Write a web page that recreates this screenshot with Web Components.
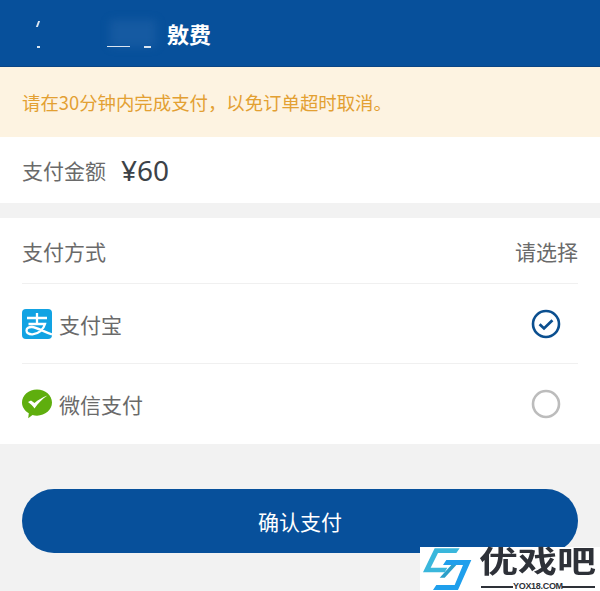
<!DOCTYPE html>
<html lang="zh">
<head>
<meta charset="utf-8">
<title>缴费</title>
<style>
    html, body { margin: 0; padding: 0; }
    body {
        width: 600px;
        height: 591px;
        overflow: hidden;
        position: relative;
        background: #f2f2f2;
        font-family: "Noto Sans CJK SC", "Noto Sans", sans-serif;
    }
</style>
</head>
<body>
<pay-header>敫费</pay-header>
<pay-notice>请在30分钟内完成支付，以免订单超时取消。</pay-notice>
<pay-amount label="支付金额" value="¥60"></pay-amount>
<pay-methods>
    <pay-method label="支付宝" checked>
        <svg slot="icon" width="30" height="30" viewBox="0 0 30 30">
            <rect width="30" height="30" rx="4" fill="#12a3e3"/>
            <path d="M5 9H25M15 4V15M6.5 15H23C21.5 20.5 16.5 25 10.5 25.3C6.5 25.5 4.5 23.7 4.5 21.6C4.5 19.2 7 17.8 10 18C15 18.4 21 22.5 30 25.5" fill="none" stroke="#fff" stroke-width="2.3"/>
        </svg>
    </pay-method>
    <pay-method label="微信支付">
        <svg slot="icon" width="30" height="30" viewBox="0 0 30 30">
            <path d="M15 0.5C23.3 0.5 30 6.4 30 13.6C30 20.8 23.3 26.7 15 26.7C13.4 26.7 11.9 26.5 10.5 26.1L6.2 29.2L6.8 24.3C2.7 21.9 0 18 0 13.6C0 6.4 6.7 0.5 15 0.5Z" fill="#5fae0e"/>
            <path d="M6 13L9 11.5L12.5 14C16 11 20 8.5 25.5 6.5C20 10 16 14.5 12.5 19.5C11 17 8.5 15 6 13Z" fill="#fff"/>
        </svg>
    </pay-method>
</pay-methods>
<pay-button>确认支付</pay-button>
<site-badge></site-badge>

<script>
class PayHeader extends HTMLElement {
    constructor() {
        super();
        this.attachShadow({ mode: 'open' });
        this.shadowRoot.innerHTML = `
            <style>
                :host {
                    display: flex;
                    align-items: center;
                    box-sizing: border-box;
                    height: 67px;
                    padding-left: 167px;
                    background: #07509b;
                    border-bottom: 1px solid #0a4585;
                    position: relative;
                }
                .title {
                    color: #fff;
                    font-size: 22px;
                    font-weight: 700;
                    line-height: 1;
                }
                /* leftovers of the blurred-out part of the title */
                .smudge { position: absolute; background: rgba(255,255,255,.85); }
                .blur { position: absolute; left: 110px; top: 20px; width: 46px; height: 27px; background: rgba(50,110,175,.35); filter: blur(4px); }
            </style>
            <div class="blur"></div>
            <i class="smudge" style="left:37px;top:21px;width:2px;height:6px;transform:skewX(-20deg)"></i>
            <i class="smudge" style="left:37px;top:46px;width:3px;height:2px"></i>
            <i class="smudge" style="left:107px;top:46px;width:23px;height:1px"></i>
            <i class="smudge" style="left:144px;top:46px;width:7px;height:2px"></i>
            <span class="title"><slot></slot></span>
        `;
    }
}

class PayNotice extends HTMLElement {
    constructor() {
        super();
        this.attachShadow({ mode: 'open' });
        this.shadowRoot.innerHTML = `
            <style>
                :host {
                    display: flex;
                    align-items: center;
                    box-sizing: border-box;
                    height: 70px;
                    padding-left: 22px;
                    background: #fdf3e1;
                    color: #e3a032;
                    font-size: 18.4px;
                }
            </style>
            <slot></slot>
        `;
    }
}

class PayAmount extends HTMLElement {
    constructor() {
        super();
        this.attachShadow({ mode: 'open' });
        this.shadowRoot.innerHTML = `
            <style>
                :host {
                    display: flex;
                    align-items: center;
                    gap: 15px;
                    box-sizing: border-box;
                    height: 66px;
                    padding-left: 22px;
                    margin-bottom: 15px;
                    background: #fff;
                }
                .label { color: #6a6a6a; font-size: 21px; }
                .value { color: #3c4248; font-size: 28px; font-family: "Noto Sans", "Noto Sans CJK SC", sans-serif; }
            </style>
            <span class="label">${this.getAttribute('label')}</span>
            <span class="value">${this.getAttribute('value')}</span>
        `;
    }
}

class PayMethods extends HTMLElement {
    constructor() {
        super();
        this.attachShadow({ mode: 'open' });
        this.shadowRoot.innerHTML = `
            <style>
                :host {
                    display: block;
                    height: 226px;
                    padding: 0 22px;
                    background: #fff;
                }
                .head {
                    display: flex;
                    align-items: center;
                    justify-content: space-between;
                    height: 65px;
                    color: #6a6a6a;
                    font-size: 21px;
                }
            </style>
            <div class="head"><span>支付方式</span><span>请选择</span></div>
            <slot></slot>
        `;
    }
}

class PayMethod extends HTMLElement {
    constructor() {
        super();
        this.attachShadow({ mode: 'open' });
        const mark = this.hasAttribute('checked')
            ? `<svg width="30" height="30" viewBox="0 0 30 30">
                   <circle cx="15" cy="15" r="13" fill="none" stroke="#0b4f8f" stroke-width="2.6"/>
                   <path d="M8.6 15.2L13 19.4L21.4 11.2" fill="none" stroke="#0b4f8f" stroke-width="2.8"/>
               </svg>`
            : `<svg width="30" height="30" viewBox="0 0 30 30">
                   <circle cx="15" cy="15" r="13" fill="none" stroke="#bcbcbc" stroke-width="2.6"/>
               </svg>`;
        this.shadowRoot.innerHTML = `
            <style>
                :host {
                    display: flex;
                    align-items: center;
                    gap: 7px;
                    box-sizing: border-box;
                    height: 80px;
                    border-top: 1px solid #f0f0f0;
                    color: #6a6a6a;
                    font-size: 21px;
                }
                :host(:last-child) { height: 81px; }
                .icon { display: flex; }
                .label { flex: 1; }
                .mark { display: flex; margin-right: 17px; }
            </style>
            <span class="icon"><slot name="icon"></slot></span>
            <span class="label">${this.getAttribute('label')}</span>
            <span class="mark">${mark}</span>
        `;
    }
}

class PayButton extends HTMLElement {
    constructor() {
        super();
        this.attachShadow({ mode: 'open' });
        this.shadowRoot.innerHTML = `
            <style>
                :host {
                    display: flex;
                    align-items: center;
                    justify-content: center;
                    box-sizing: border-box;
                    height: 64px;
                    margin: 45px 22px 0;
                    border-radius: 32px;
                    background: #07509b;
                    color: #fff;
                    font-size: 21px;
                }
            </style>
            <slot></slot>
        `;
    }
}

// watermark sits over the page corner
class SiteBadge extends HTMLElement {
    constructor() {
        super();
        this.attachShadow({ mode: 'open' });
        this.shadowRoot.innerHTML = `
            <style>
                :host {
                    display: block;
                    position: absolute;
                    left: 420px;
                    top: 547px;
                    width: 180px;
                    height: 44px;
                    background: #fff;
                }
                svg { position: absolute; left: -2px; top: -2px; }
                .name {
                    position: absolute;
                    left: 59px;
                    top: 0;
                    color: #2e3138;
                    font-family: "Liberation Sans", "Noto Sans CJK SC", sans-serif;
                    font-size: 30px;
                    line-height: 30px;
                    font-weight: 700;
                    white-space: nowrap;
                    transform: scaleX(1.3);
                    transform-origin: left top;
                }
                .line { position: absolute; top: 39px; height: 2px; background: #2e3138; }
                .url {
                    position: absolute;
                    left: 93px;
                    top: 34px;
                    color: #2e3138;
                    font: 700 9px/10px "Liberation Sans", sans-serif;
                    letter-spacing: -.3px;
                }
            </style>
            <svg width="70" height="46" viewBox="0 0 210 138">
                <path d="M50 10H125L115 24H60L38 68H88L80 82H15Z" fill="#3ab7dc"/>
                <path d="M100 60H115L80 98H65Z" fill="#2b9fc9"/>
                <path d="M85 45H160L120 135H45L55 120H110L135 60H75Z" fill="#1f9fec"/>
            </svg>
            <span class="name">优戏吧</span>
            <i class="line" style="left:61px;width:32px"></i>
            <span class="url">YOX18.COM</span>
            <i class="line" style="left:142px;width:33px"></i>
        `;
    }
}

customElements.define('pay-header', PayHeader);
customElements.define('pay-notice', PayNotice);
customElements.define('pay-amount', PayAmount);
customElements.define('pay-methods', PayMethods);
customElements.define('pay-method', PayMethod);
customElements.define('pay-button', PayButton);
customElements.define('site-badge', SiteBadge);
</script>
</body>
</html>
